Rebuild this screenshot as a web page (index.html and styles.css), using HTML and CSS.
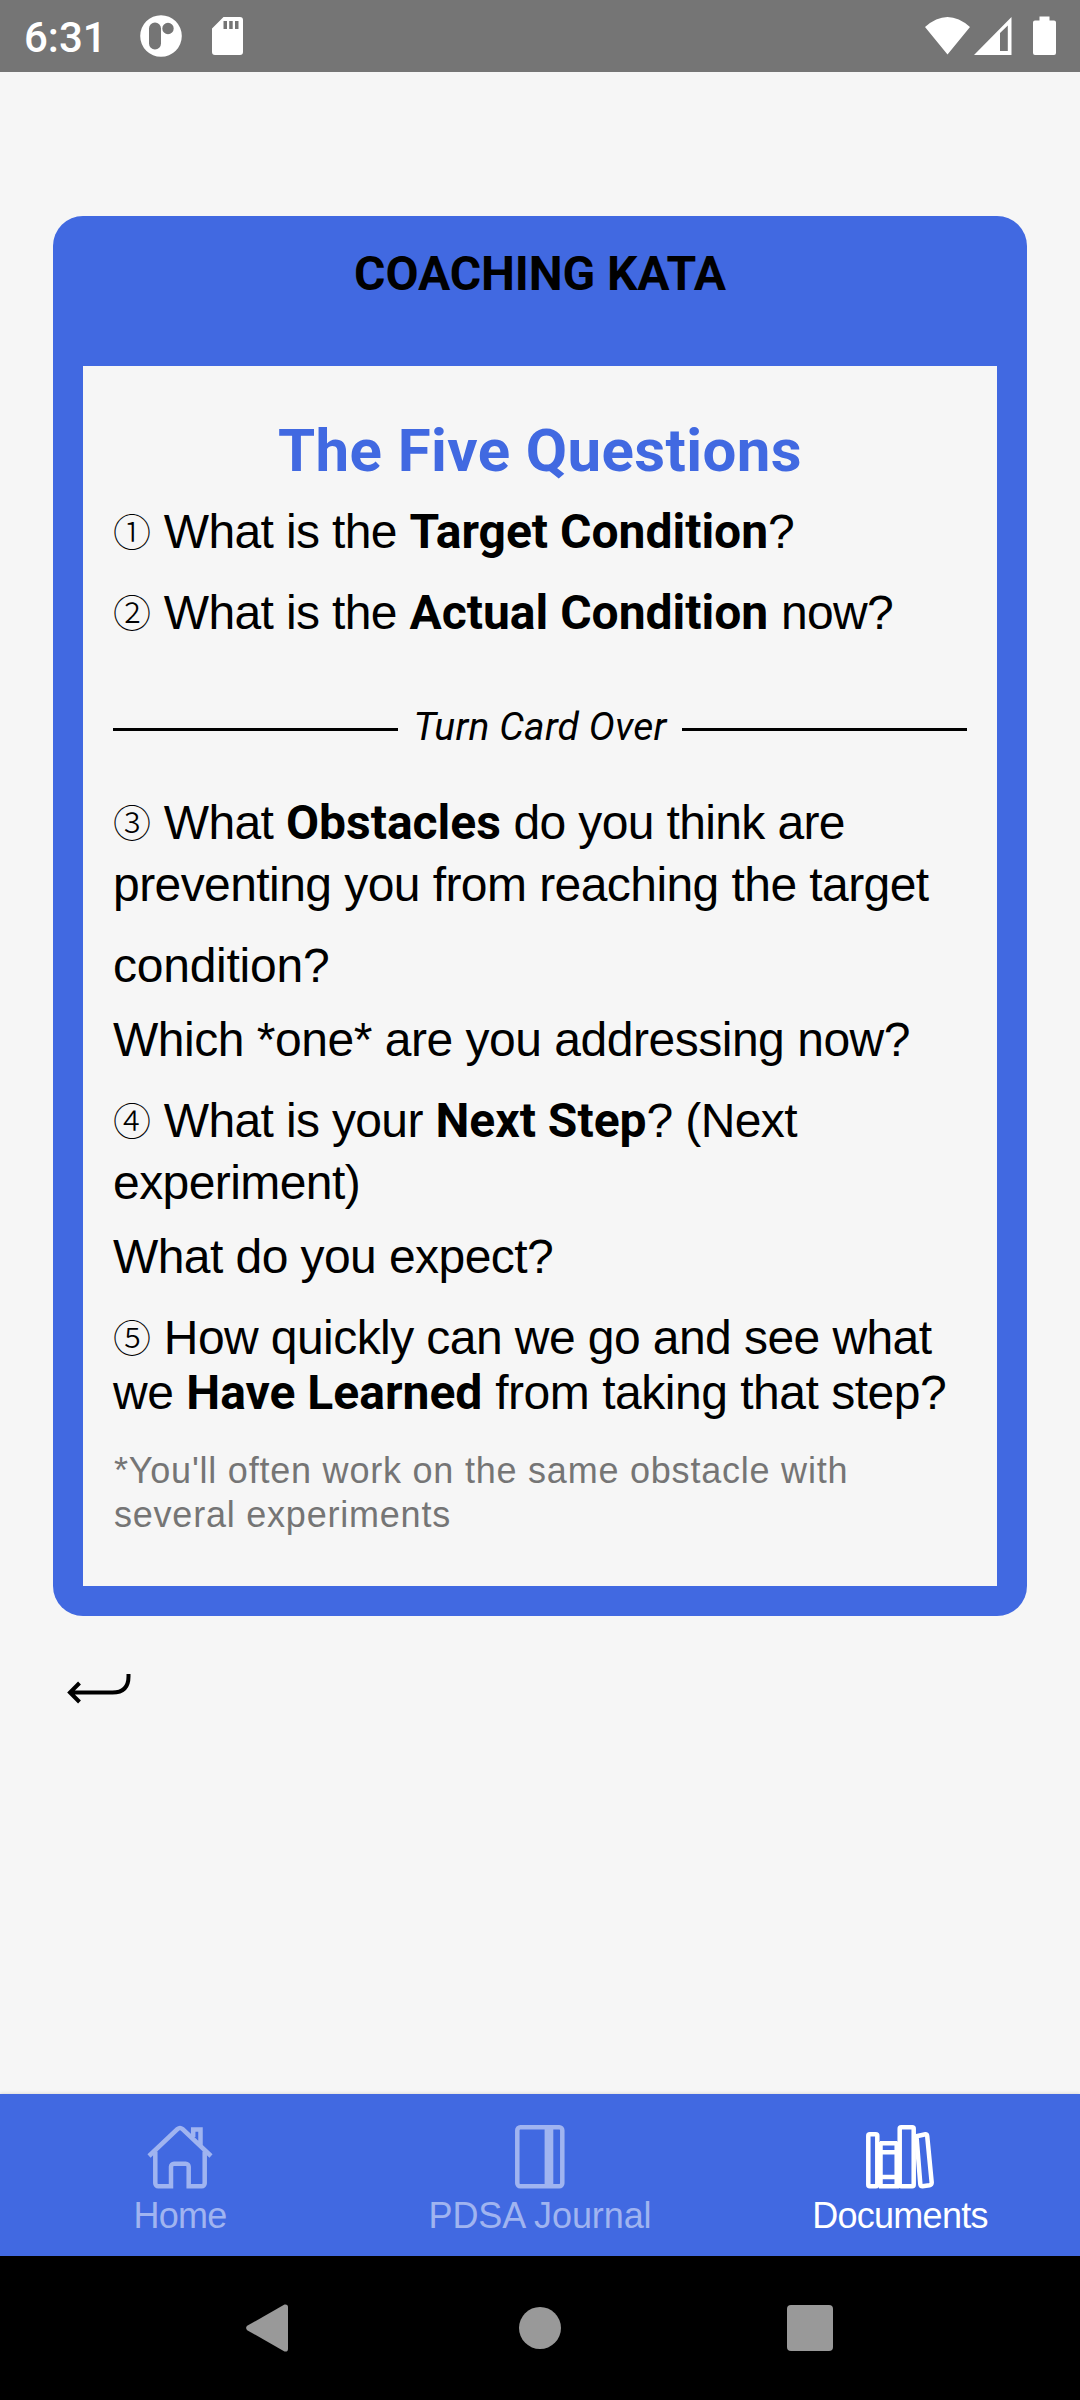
FILE: index.html
```html
<!DOCTYPE html>
<html lang="en">
<head>
<meta charset="utf-8">
<title>Coaching Kata</title>
<link rel="stylesheet" href="styles.css">
</head>
<body>
<header class="status">
  <span class="clock">6:31</span>
  <svg class="notif" width="42" height="42" viewBox="0 0 42 42"><path fill="#fff" fill-rule="evenodd" d="M21 .2a20.8 20.8 0 1 0 0 41.6a20.8 20.8 0 1 0 0-41.6zM15 7.500a6 6 0 0 1 6 6v15a6 6 0 0 1-12 0v-15a6 6 0 0 1 6-6zM28 7.800a5.700 5.700 0 1 1 0 11.400a5.700 5.700 0 1 1 0-11.400z"/></svg>
  <svg class="sd" width="31" height="38" viewBox="0 0 31 38"><path fill="#fff" fill-rule="evenodd" d="M11.500 0H28a3 3 0 0 1 3 3v32a3 3 0 0 1-3 3H3a3 3 0 0 1-3-3V11.500zM11.500 4v8h3.500V4zM17.200 4v8h3.500V4zM23 4v8h3.500V4z"/></svg>
  <svg class="system" width="132" height="40" viewBox="0 0 132 40"><path fill="#fff" fill-rule="evenodd" d="M0 11Q22.500-9 45 11L22.500 38.500zM49 39L86.500 1V39zM75 17v18h7.800V9.500zM110 4.500h4.500V.5h10v4h4.500a2 2 0 0 1 2 2V37a2 2 0 0 1-2 2h-19a2 2 0 0 1-2-2V6.500a2 2 0 0 1 2-2z"/></svg>
</header>
<main class="screen">
  <article class="card">
    <h1 class="card-title">COACHING KATA</h1>
    <section class="sheet">
      <h2 class="heading">The Five Questions</h2>
      <p class="line first numbered"><span class="num">①</span> What is the <b>Target Condition</b>?</p>
      <p class="line wide numbered"><span class="num">②</span> What is the <b>Actual Condition</b> now?</p>
      <div class="divider"><i>Turn Card Over</i></div>
      <p class="line numbered"><span class="num">③</span> What <b>Obstacles</b> do you think are</p>
      <p class="line tight snug">preventing you from reaching the target</p>
      <p class="line wide loose">condition?</p>
      <p class="line mid">Which *one* are you addressing now?</p>
      <p class="line wide numbered"><span class="num">④</span> What is your <b>Next Step</b>? (Next</p>
      <p class="line tight snug">experiment)</p>
      <p class="line mid snug">What do you expect?</p>
      <p class="line wide snug"><span class="num">⑤</span> How quickly can we go and see what</p>
      <p class="line">we <b>Have Learned</b> from taking that step?</p>
      <p class="note">*You'll often work on the same obstacle with<br>several experiments</p>
    </section>
  </article>
  <svg class="back" width="66" height="32" viewBox="0 0 66 32"><path fill="none" stroke="#000" stroke-width="4" d="M62.500 2v2.500Q62.500 20.500 46.500 20.500H4M13.500 11L4 20.500L13.500 30"/></svg>
</main>
<nav class="tabs">
  <a class="tab"><svg width="72" height="72" viewBox="0 0 72 72"><g fill="none" stroke="currentColor" stroke-width="4.500"><path d="M5 36L33.500 9Q36 7 38.500 9L67 36M49.200 17V9.500h7.300V25"/><path d="M11.300 31.500V63.300a3 3 0 0 0 3 3H27V46.700a3 3 0 0 1 3-3H41.700a3 3 0 0 1 3 3V66.300H57.700a3 3 0 0 0 3-3V31.500"/></g></svg><span>Home</span></a>
  <a class="tab even"><svg width="72" height="72" viewBox="0 0 72 72"><rect x="13.300" y="7.300" width="45" height="59" rx="3" fill="none" stroke="currentColor" stroke-width="4.500"/><path fill="currentColor" d="M40.600 9h8.700V65h-8.700z"/></svg><span>PDSA Journal</span></a>
  <a class="tab active"><svg width="72" height="72" viewBox="0 0 72 72"><g fill="none" stroke="currentColor" stroke-width="4.500" stroke-linejoin="round"><rect x="4.300" y="14.300" width="9" height="52" rx="1.500"/><path d="M16 23.300H33.500M16 32.300H33.500M16 57H33.500M15 66.300H35M16.500 22V66M32.700 22V66"/><rect x="35.700" y="7.300" width="14" height="59" rx="1.500"/><path d="M52.500 16.300L61.500 14.300Q63 14.300 63.200 16L67.700 62.500Q67.700 64.800 65.500 65.300L58.500 66.200Q56.500 66.200 56.300 64z"/></g></svg><span>Documents</span></a>
</nav>
<footer class="sysnav">
  <svg width="1080" height="144" viewBox="0 0 1080 144"><g fill="#999"><path d="M284.500 48.500L247.200 69.800Q245 72 247.200 74.200L284.500 95.500Q288 96 288 93V51Q288 48 284.500 48.500z"/><circle cx="540" cy="72" r="21"/><rect x="787" y="49" width="46" height="46" rx="4"/></g></svg>
</footer>
</body>
</html>
```
FILE: styles.css
```css
* { box-sizing: border-box; margin: 0; padding: 0; }
body { width: 1080px; height: 2400px; display: flex; flex-direction: column; background: #f6f6f6; color: #000; font-family: "Liberation Sans", Arial, sans-serif; overflow: hidden; }
.status { height: 72px; background: #757575; display: flex; align-items: center; padding: 0 23px 0 24px; }
.clock { font: 500 42px/68px Roboto, sans-serif; color: #fff; width: 115.500px; padding-top: 4px; }
.sd { margin-left: 30px; margin-right: auto; }
.screen { flex: 1; padding: 144px 53px 0; }
.card { height: 1400px; border-radius: 30px; background: #4169e1; padding: 30px; }
.card-title { font: 700 48px/56px Roboto, sans-serif; text-align: center; height: 120px; letter-spacing: -0.1px; }
.sheet { height: 1220px; background: #f6f6f6; padding: 49px 30px 0; }
.heading { font: 700 60px/72px Roboto, sans-serif; text-align: center; color: #4169e1; letter-spacing: 0.4px; }
.line { font-size: 48px; line-height: 55px; letter-spacing: -0.48px; white-space: nowrap; }
.line b { font-family: Roboto, sans-serif; line-height: 0; letter-spacing: 0; }
.num { font: 300 38px/0 "Noto Sans CJK JP", sans-serif; letter-spacing: 0; vertical-align: 2px; }
.first { margin-top: 17px; }
.wide { margin-top: 26px; }
.mid { margin-top: 19px; }
.tight { margin-top: 7px; }
.snug { letter-spacing: -0.57px; }
.numbered { letter-spacing: -0.64px; }
.loose { letter-spacing: -0.25px; }
.divider { display: flex; align-items: center; gap: 15px; height: 50px; margin: 62px 0 43px; font: 39px/50px Roboto, sans-serif; letter-spacing: 0.2px; white-space: nowrap; }
.divider::before, .divider::after { content: ""; flex: 1; height: 3px; background: #000; margin-top: 5px; }
.note { margin-top: 29px; padding-left: 1px; font-size: 36px; line-height: 44px; letter-spacing: 0.78px; color: #757575; white-space: nowrap; }
.back { display: block; margin: 56px 0 0 13px; }
.tabs { height: 162px; background: #4169e1; display: grid; grid-template-columns: repeat(3, 1fr); box-shadow: 0 -1px 3px rgba(0,0,0,.1); }
.tab { display: flex; flex-direction: column; align-items: center; gap: 3px; padding-top: 26px; color: #a0b4f0; font-size: 36px; line-height: 42px; letter-spacing: -0.75px; }
.tab.even { letter-spacing: -0.1px; }
.tab.active { color: #fff; }
.sysnav { height: 144px; background: #000; }
.sysnav svg { display: block; }
```
